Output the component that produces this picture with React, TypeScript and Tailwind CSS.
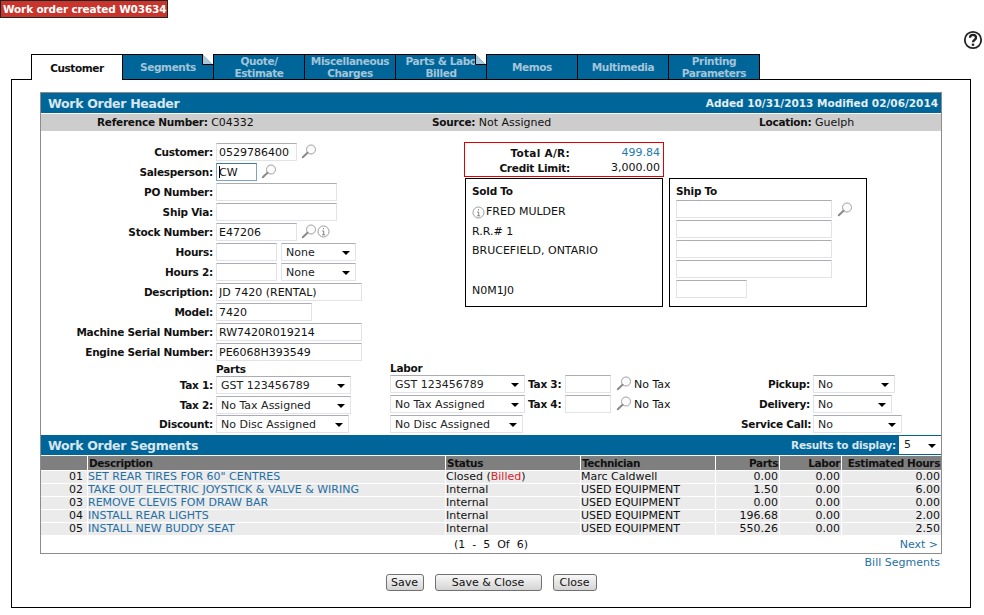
const dejavu = "font-['DejaVu_Sans',sans-serif]";
const boldBase = "font-bold text-[10.5px]";
const boldText = `${boldBase} tracking-[-0.25px]`;

const tabs = [
  { label: ["Customer"], active: true },
  { label: ["Segments"], fold: true },
  { label: ["Quote/", "Estimate"] },
  { label: ["Miscellaneous", "Charges"] },
  { label: ["Parts & Labo", "Billed"], fold: true },
  { label: ["Memos"] },
  { label: ["Multimedia"] },
  { label: ["Printing", "Parameters"] },
];

const segments = [
  { no: "01", desc: 'SET REAR TIRES FOR 60" CENTRES', status: "Closed", billed: true, tech: "Marc Caldwell", parts: "0.00", labor: "0.00", hours: "0.00" },
  { no: "02", desc: "TAKE OUT ELECTRIC JOYSTICK & VALVE & WIRING", status: "Internal", tech: "USED EQUIPMENT", parts: "1.50", labor: "0.00", hours: "6.00" },
  { no: "03", desc: "REMOVE CLEVIS FOM DRAW BAR", status: "Internal", tech: "USED EQUIPMENT", parts: "0.00", labor: "0.00", hours: "0.00" },
  { no: "04", desc: "INSTALL REAR LIGHTS", status: "Internal", tech: "USED EQUIPMENT", parts: "196.68", labor: "0.00", hours: "2.00" },
  { no: "05", desc: "INSTALL NEW BUDDY SEAT", status: "Internal", tech: "USED EQUIPMENT", parts: "550.26", labor: "0.00", hours: "2.50" },
];

const Magnifier = () => (
  <svg width="16" height="15" viewBox="0 0 16 15" className="shrink-0" fill="none">
    <circle cx="10" cy="5.5" r="4.5" stroke="#a0a0a0" strokeWidth="1" fill="#fcfcfc" />
    <path d="M6.5 8.8 L1.8 13.2" stroke="#8a8a8a" strokeWidth="2" strokeLinecap="round" />
  </svg>
);

const Info = () => (
  <svg width="13" height="13" viewBox="0 0 13 13" className="shrink-0" fill="none">
    <circle cx="6.5" cy="6.5" r="5.5" stroke="#9a9a9a" strokeWidth="1" />
    <path d="M6.5 3v1.3M5.2 6h1.5v3.6M5 9.8h3.2" stroke="#808080" strokeWidth="1" />
  </svg>
);

const Field = ({ w, value = "", focused = false }: { w: string; value?: string; focused?: boolean }) => (
  <div className={`relative shrink-0 ${w}`}>
    <input
      readOnly
      value={value}
      className={`block h-[18px] w-full px-[2px] text-[11px] text-[#111] outline-none border ${
        focused
          ? "border-[#7da2ce] border-t-[#3d7bad]"
          : "border-[#e2e3ea] border-t-[#abadb3]"
      }`}
    />
    {focused && <span className="absolute left-[3px] top-[3px] w-px h-3 bg-black" />}
  </div>
);

const Select = ({ w, value }: { w: string; value: string }) => (
  <div className={`h-[18px] ${w} shrink-0 flex items-center justify-between pl-[4px] pr-[5px] text-[11px] text-[#222] border border-[#e2e3ea] border-t-[#abadb3]`}>
    <span className="pt-[2px]">{value}</span>
    <span className="w-0 h-0 border-x-[4px] border-x-transparent border-t-[4px] border-t-black mt-[2px]" />
  </div>
);

const B = ({ className = "", children }: { className?: string; children: React.ReactNode }) => (
  <span className={`${boldText} text-[#111] ${className}`}>{children}</span>
);

const Row = ({ label, children }: { label: string; children: React.ReactNode }) => (
  <div className="h-5 flex items-center">
    <B className="w-[172px] text-right mr-[3px] shrink-0 pt-[2px]">{label}:</B>
    <div className="flex items-center">{children}</div>
  </div>
);

const Heading = ({ children }: { children: React.ReactNode }) => (
  <span className="text-[12.5px] tracking-[-0.3px] font-bold text-[#d8e6f0] pt-[3px]">{children}</span>
);

const Btn = ({ w, label }: { w: string; label: string }) => (
  <button className={`h-[17px] ${w} rounded-[3px] border border-[#707070] bg-gradient-to-b from-[#f8f8f8] to-[#d4d4d4] text-[11px] text-[#111] leading-none`}>
    {label}
  </button>
);

const th = `bg-[#7f7f7f] ${boldBase} tracking-[-0.4px] text-[#111] border-l border-white px-[1px] leading-[14px]`;
const td = "bg-[#ebebeb] border-l border-t border-white leading-[12px] pl-0 pr-[1px]";

export default function App() {
  return (
    <div className={`w-[984px] h-[615px] bg-white overflow-hidden text-[11px] text-[#111] ${dejavu}`}>
      <div className="h-[54px] flex justify-between items-start">
        <div className={`h-[18px] w-[168px] bg-[#c9352c] border border-[#222] text-white ${boldBase} tracking-[-0.15px] leading-[16px] pl-[2px] whitespace-nowrap`}>
          Work order created W03634
        </div>
        <svg width="20" height="20" viewBox="0 0 20 20" fill="none" className="mt-[30px] mr-[1px]">
          <circle cx="10" cy="10" r="8.2" stroke="#222" strokeWidth="1.8" />
          <path d="M7 7.8c0-4 6-4 6 0 0 2.3-3 2.2-3 4.4" stroke="#222" strokeWidth="2.3" />
          <rect x="8.8" y="13.6" width="2.4" height="2.2" fill="#222" />
        </svg>
      </div>

      <div className="flex pl-[31px] h-[26px] relative z-10">
        {tabs.map((t) => (
          <div
            key={t.label[0]}
            className={`relative w-[91px] h-[26px] border-l border-t border-black flex flex-col items-center justify-center ${boldBase} tracking-[-0.4px] leading-[12px] ${
              t.active ? "text-[#111] bg-white" : "bg-[#006699] text-[#a4c4d8] border-b"
            } ${t.label[0] === "Printing" ? "border-r w-[92px]" : ""}`}
          >
            {t.label.map((l) => (
              <span key={l} className="whitespace-nowrap">{l}</span>
            ))}
            {t.fold && (
              <svg width="11" height="11" viewBox="0 0 11 11" className="absolute -top-px right-0">
                <path d="M0 0 L11 11 L11 0 Z" fill="#fff" />
                <path d="M0.5 0.5 L10.5 10.5 L0.5 10.5 Z" fill="#a9c9d9" />
                <path d="M0.5 0 V10.5 H11" stroke="#000" strokeWidth="1" fill="none" />
              </svg>
            )}
          </div>
        ))}
      </div>

      <div className="ml-[11px] mt-[-1px] w-[960px] h-[529px] border border-black pt-3 pl-[28px]">
        <div className="w-[902px] h-[462px] border border-[#8c8c8c] flex flex-col">
          <div className="h-5 bg-[#006699] flex justify-between items-center pl-[7px] pr-[3px] shrink-0">
            <Heading>Work Order Header</Heading>
            <span className={`${boldBase} tracking-[0px] text-[#e4eef4] pt-px`}>Added 10/31/2013 Modified 02/06/2014</span>
          </div>
          <div className="h-[17px] mt-px bg-[#cdcdcd] flex items-center pt-px shrink-0">
            <span className="w-[391px] pl-[56px]"><B>Reference Number:</B> C04332</span>
            <span className="w-[327px]"><B>Source:</B> Not Assigned</span>
            <span><B>Location:</B> Guelph</span>
          </div>

          <div className="flex h-[231px] pt-[11px] shrink-0">
            <div className="w-[423px] shrink-0">
              <Row label="Customer">
                <Field w="w-[81px]" value="0529786400" />
                <span className="ml-[4px] -mt-px"><Magnifier /></span>
              </Row>
              <Row label="Salesperson">
                <Field w="w-[41px]" value="CW" focused />
                <span className="ml-[4px] -mt-px"><Magnifier /></span>
              </Row>
              <Row label="PO Number"><Field w="w-[121px]" /></Row>
              <Row label="Ship Via"><Field w="w-[121px]" /></Row>
              <Row label="Stock Number">
                <Field w="w-[81px]" value="E47206" />
                <span className="ml-[4px] -mt-px"><Magnifier /></span>
                <span className="-mt-px"><Info /></span>
              </Row>
              <Row label="Hours">
                <Field w="w-[61px]" />
                <span className="w-[4px]" />
                <Select w="w-[75px]" value="None" />
              </Row>
              <Row label="Hours 2">
                <Field w="w-[61px]" />
                <span className="w-[4px]" />
                <Select w="w-[75px]" value="None" />
              </Row>
              <Row label="Description"><Field w="w-[146px]" value="JD 7420 (RENTAL)" /></Row>
              <Row label="Model"><Field w="w-[96px]" value="7420" /></Row>
              <Row label="Machine Serial Number"><Field w="w-[146px]" value="RW7420R019214" /></Row>
              <Row label="Engine Serial Number"><Field w="w-[146px]" value="PE6068H393549" /></Row>
            </div>

            <div className="flex flex-col">
              <div className="w-[200px] h-[35px] border border-[#e00000] pt-[3px]">
                <div className="flex h-[15px] items-center">
                  <B className="w-[105px] text-right !tracking-[0.3px]">Total A/R:</B>
                  <span className="flex-1 text-right pr-[3px] text-[#1f7ab0]">499.84</span>
                </div>
                <div className="flex h-[15px] items-center">
                  <B className="w-[105px] text-right">Credit Limit:</B>
                  <span className="flex-1 text-right pr-[3px]">3,000.00</span>
                </div>
              </div>
              <div className="flex gap-[6px] ml-px mt-px">
                <div className="w-[198px] h-[129px] border border-black pl-[6px] pt-[6px]">
                  <B className="block leading-[13px]">Sold To</B>
                  <div className="flex items-center gap-[1px] h-5 mt-[4px]"><Info /><span>FRED MULDER</span></div>
                  <div className="h-5 leading-5">R.R.# 1</div>
                  <div className="h-5 leading-[18px]">BRUCEFIELD, ONTARIO</div>
                  <div className="h-5" />
                  <div className="h-5 leading-[18px]">N0M1J0</div>
                </div>
                <div className="w-[198px] h-[129px] border border-black pl-[6px] pt-[6px]">
                  <B className="block leading-[13px]">Ship To</B>
                  <div className="flex flex-col gap-[2px] mt-[2px]">
                    <div className="flex items-center gap-[5px]">
                      <Field w="w-[156px]" />
                      <Magnifier />
                    </div>
                    <Field w="w-[156px]" />
                    <Field w="w-[156px]" />
                    <Field w="w-[156px]" />
                    <Field w="w-[71px]" />
                  </div>
                </div>
              </div>
            </div>
          </div>

          <div className="flex h-[73px] shrink-0">
            <div className="w-[349px] shrink-0">
              <B className="block ml-[175px] h-[13px] leading-[14px]">Parts</B>
              <Row label="Tax 1"><Select w="w-[135px]" value="GST 123456789" /></Row>
              <Row label="Tax 2"><Select w="w-[135px]" value="No Tax Assigned" /></Row>
              <div className="-mt-px"><Row label="Discount"><Select w="w-[133px]" value="No Disc Assigned" /></Row></div>
            </div>
            <div className="w-[351px] shrink-0">
              <B className="block h-[12px] leading-[12px]">Labor</B>
              <div className="h-5 flex items-center">
                <Select w="w-[135px]" value="GST 123456789" />
                <B className="ml-[3px] w-[37px] pt-px">Tax 3:</B>
                <Field w="w-[46px]" />
                <span className="ml-[5px] -mt-px"><Magnifier /></span>
                <span className="ml-[2px] mt-[2px]">No Tax</span>
              </div>
              <div className="h-5 flex items-center">
                <Select w="w-[135px]" value="No Tax Assigned" />
                <B className="ml-[3px] w-[37px] pt-px">Tax 4:</B>
                <Field w="w-[46px]" />
                <span className="ml-[5px] -mt-px"><Magnifier /></span>
                <span className="ml-[2px] mt-[2px]">No Tax</span>
              </div>
              <div className="h-5 flex items-center"><Select w="w-[133px]" value="No Disc Assigned" /></div>
            </div>
            <div className="pt-[12px]">
              <div className="h-5 flex items-center">
                <B className="w-[69px] text-right mr-[3px] pt-px">Pickup:</B>
                <Select w="w-[82px]" value="No" />
              </div>
              <div className="h-5 flex items-center">
                <B className="w-[69px] text-right mr-[3px] pt-px">Delivery:</B>
                <Select w="w-[79px]" value="No" />
              </div>
              <div className="h-5 flex items-center">
                <B className="w-[69px] text-right mr-[3px] pt-px whitespace-nowrap">Service Call:</B>
                <Select w="w-[89px]" value="No" />
              </div>
            </div>
          </div>

          <div className="h-[20px] bg-[#006699] flex justify-between items-center pl-[7px] shrink-0">
            <Heading>Work Order Segments</Heading>
            <div className="flex items-center gap-[3px]">
              <B className="!text-[#dbe7ef] pt-px">Results to display:</B>
              <div className="h-[18px] w-[42px] bg-white flex items-center justify-between pl-[5px] pr-[5px] text-[#222]">
                <span className="pt-px">5</span>
                <span className="w-0 h-0 border-x-[4px] border-x-transparent border-t-[4px] border-t-black mt-[2px]" />
              </div>
            </div>
          </div>

          <table className="w-[900px] mt-px border-separate border-spacing-0 table-fixed shrink-0">
            <colgroup>
              <col className="w-[46px]" />
              <col className="w-[358px]" />
              <col className="w-[135px]" />
              <col className="w-[135px]" />
              <col className="w-[64px]" />
              <col className="w-[62px]" />
              <col className="w-[100px]" />
            </colgroup>
            <thead>
              <tr className="h-[14px]">
                <th className={`${th} !border-l-0`} />
                <th className={`${th} text-left`}>Description</th>
                <th className={`${th} text-left`}>Status</th>
                <th className={`${th} text-left`}>Technician</th>
                <th className={`${th} text-right`}>Parts</th>
                <th className={`${th} text-right`}>Labor</th>
                <th className={`${th} text-right whitespace-nowrap`}>Estimated Hours</th>
              </tr>
            </thead>
            <tbody>
              {segments.map((s) => (
                <tr key={s.no} className="h-[13px]">
                  <td className={`${td} !border-l-0 text-right !pr-[4px]`}>{s.no}</td>
                  <td className={`${td} text-[#1f6fa5] whitespace-nowrap`}>{s.desc}</td>
                  <td className={td}>
                    {s.status}
                    {s.billed && (
                      <>
                        {" ("}
                        <span className="text-[#d8232a]">Billed</span>
                        {")"}
                      </>
                    )}
                  </td>
                  <td className={td}>{s.tech}</td>
                  <td className={`${td} text-right`}>{s.parts}</td>
                  <td className={`${td} text-right`}>{s.labor}</td>
                  <td className={`${td} text-right`}>{s.hours}</td>
                </tr>
              ))}
            </tbody>
          </table>

          <div className="relative flex-1 flex items-center justify-center pt-[2px]">
            <span className="whitespace-pre">(1  -  5  Of  6)</span>
            <a className="absolute right-[3px] text-[#1f6fa5]">Next &gt;</a>
          </div>
        </div>

        <div className="w-[902px] text-right pr-[2px] h-[18px] leading-[18px] text-[#1f6fa5]">Bill Segments</div>

        <div className="w-[902px] flex justify-center gap-[11px] mt-[2px]">
          <Btn w="w-[38px]" label="Save" />
          <Btn w="w-[107px]" label="Save & Close" />
          <Btn w="w-[44px]" label="Close" />
        </div>
      </div>
    </div>
  );
}
